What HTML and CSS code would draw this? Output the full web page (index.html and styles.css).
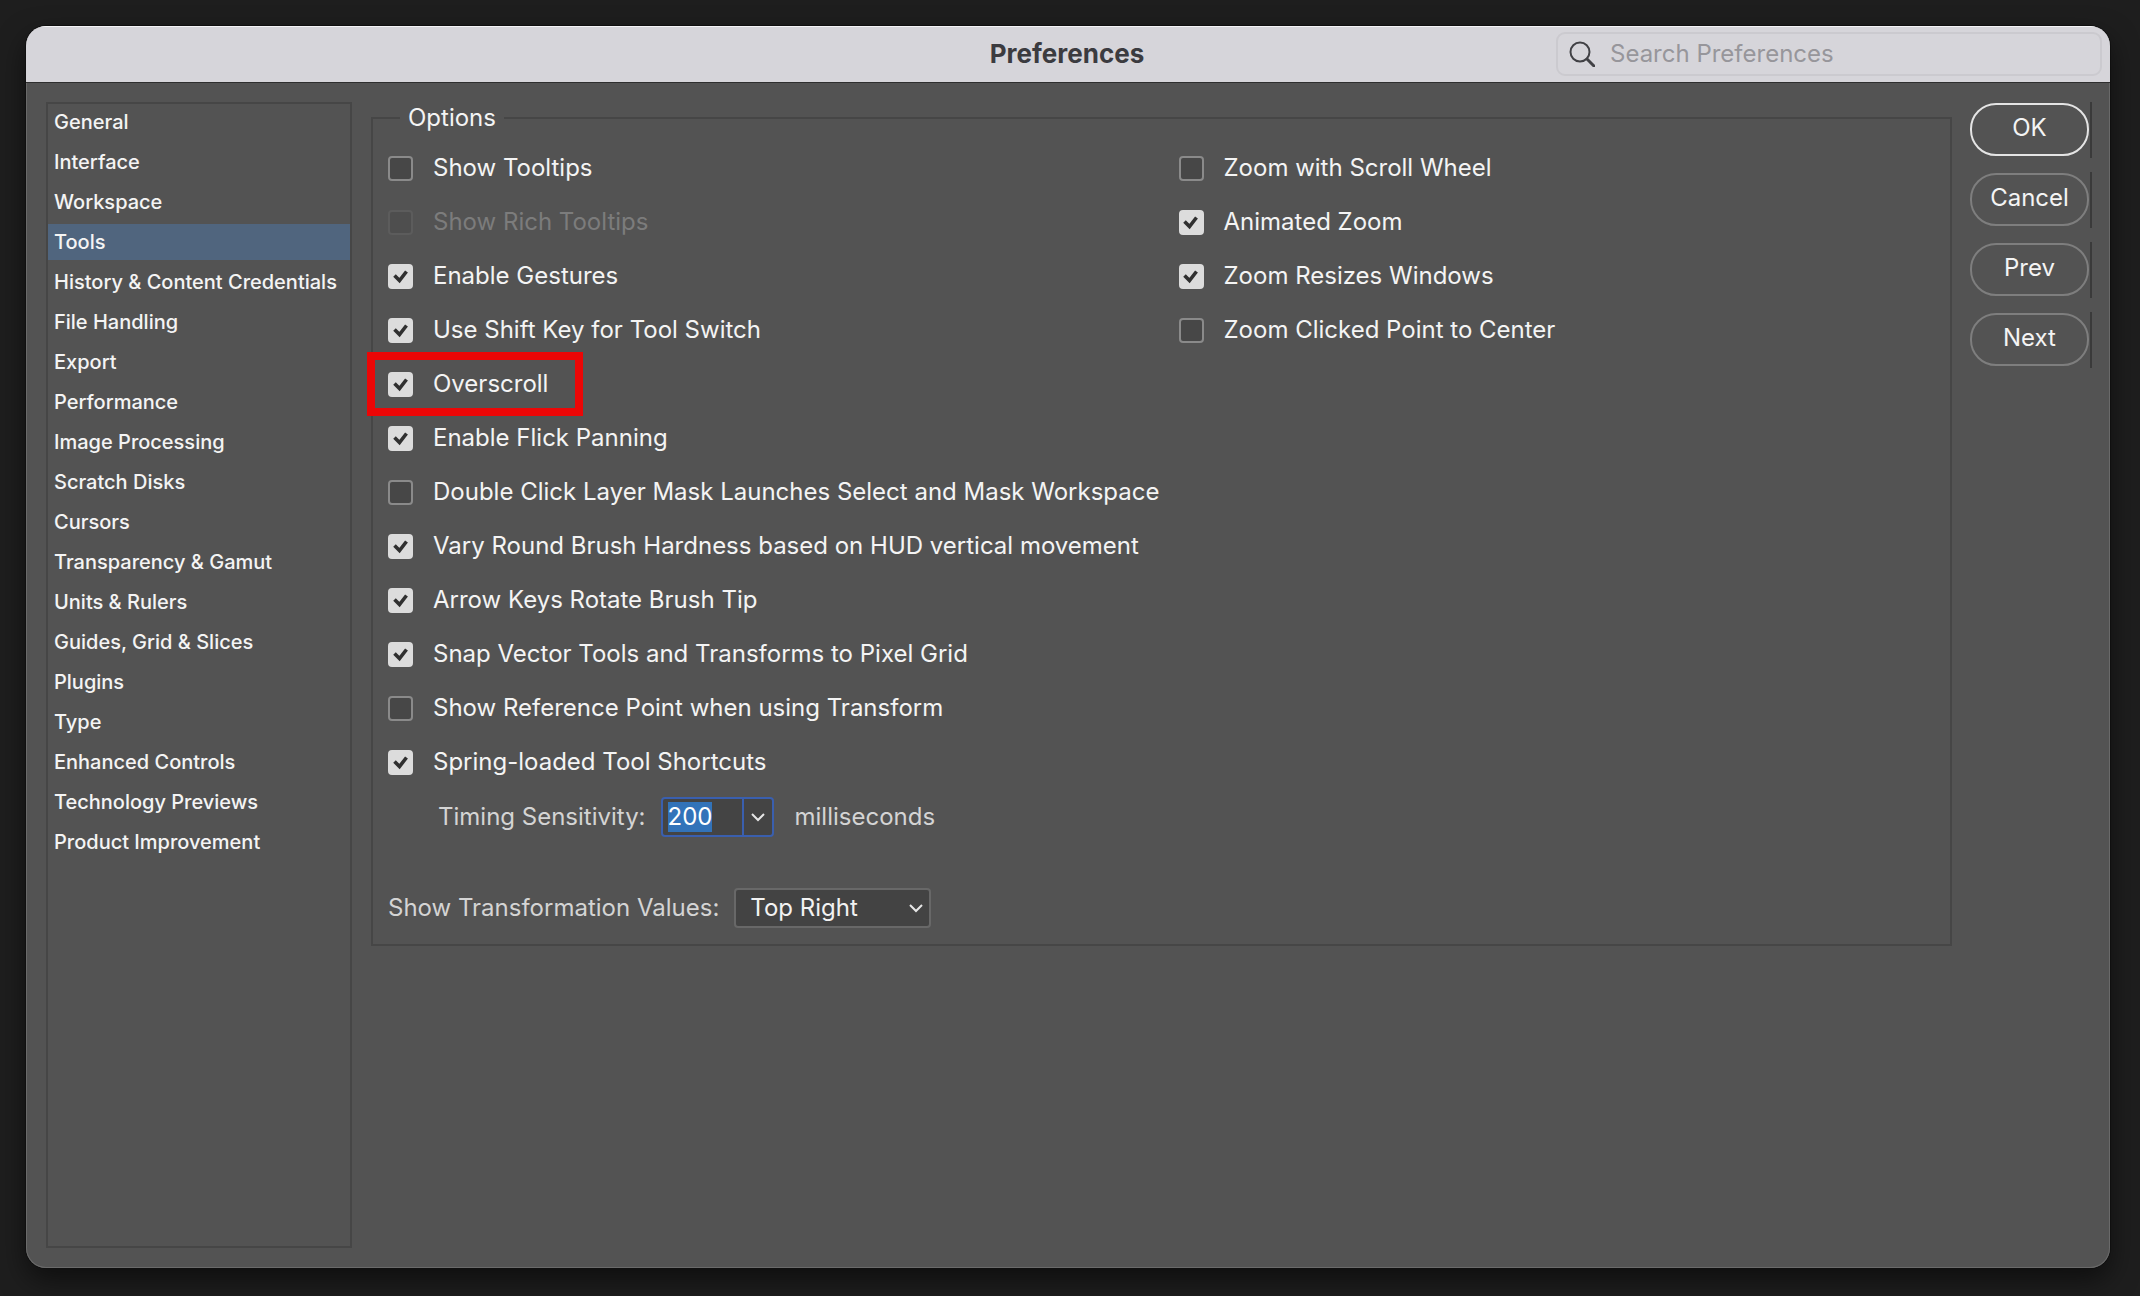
FILE: index.html
```html
<!DOCTYPE html>
<html lang="en">
<head>
<meta charset="utf-8">
<title>Preferences</title>
<link rel="stylesheet" href="styles.css">
</head>
<body>
<div class="dialog">
  <header class="titlebar">
    <h1 class="title">Preferences</h1>
    <label class="search">
      <svg class="search-icon" viewBox="0 0 26 26" aria-hidden="true"><circle cx="11" cy="11" r="9.5"/><path d="M18 18l7 7"/></svg>
      <input class="search-input" type="search" placeholder="Search Preferences" aria-label="Search Preferences">
    </label>
  </header>
  <div class="body">
    <nav class="sidebar">
      <a class="nav-item" href="#general">General</a>
      <a class="nav-item" href="#interface">Interface</a>
      <a class="nav-item" href="#workspace">Workspace</a>
      <a class="nav-item selected" href="#tools" aria-current="page">Tools</a>
      <a class="nav-item" href="#history">History &amp; Content Credentials</a>
      <a class="nav-item" href="#files">File Handling</a>
      <a class="nav-item" href="#export">Export</a>
      <a class="nav-item" href="#performance">Performance</a>
      <a class="nav-item" href="#image">Image Processing</a>
      <a class="nav-item" href="#scratch">Scratch Disks</a>
      <a class="nav-item" href="#cursors">Cursors</a>
      <a class="nav-item" href="#transparency">Transparency &amp; Gamut</a>
      <a class="nav-item" href="#units">Units &amp; Rulers</a>
      <a class="nav-item" href="#guides">Guides, Grid &amp; Slices</a>
      <a class="nav-item" href="#plugins">Plugins</a>
      <a class="nav-item" href="#type">Type</a>
      <a class="nav-item" href="#enhanced">Enhanced Controls</a>
      <a class="nav-item" href="#previews">Technology Previews</a>
      <a class="nav-item" href="#improvement">Product Improvement</a>
    </nav>
    <fieldset class="options">
      <legend class="legend">Options</legend>
      <div class="columns">
        <div class="column">
          <label class="option"><input class="check" type="checkbox">Show Tooltips</label>
          <label class="option disabled"><input class="check" type="checkbox" disabled>Show Rich Tooltips</label>
          <label class="option"><input class="check" type="checkbox" checked>Enable Gestures</label>
          <label class="option"><input class="check" type="checkbox" checked>Use Shift Key for Tool Switch</label>
          <label class="option highlighted"><input class="check" type="checkbox" checked>Overscroll</label>
          <label class="option"><input class="check" type="checkbox" checked>Enable Flick Panning</label>
          <label class="option"><input class="check" type="checkbox">Double Click Layer Mask Launches Select and Mask Workspace</label>
          <label class="option"><input class="check" type="checkbox" checked>Vary Round Brush Hardness based on HUD vertical movement</label>
          <label class="option"><input class="check" type="checkbox" checked>Arrow Keys Rotate Brush Tip</label>
          <label class="option"><input class="check" type="checkbox" checked>Snap Vector Tools and Transforms to Pixel Grid</label>
          <label class="option"><input class="check" type="checkbox">Show Reference Point when using Transform</label>
          <label class="option"><input class="check" type="checkbox" checked>Spring-loaded Tool Shortcuts</label>
        </div>
        <div class="column">
          <label class="option"><input class="check" type="checkbox">Zoom with Scroll Wheel</label>
          <label class="option"><input class="check" type="checkbox" checked>Animated Zoom</label>
          <label class="option"><input class="check" type="checkbox" checked>Zoom Resizes Windows</label>
          <label class="option"><input class="check" type="checkbox">Zoom Clicked Point to Center</label>
        </div>
      </div>
      <div class="field timing">
        <label for="timing">Timing Sensitivity:</label>
        <span class="combo">
          <input class="combo-input" id="timing" type="text" value="200">
          <button class="combo-button" type="button" aria-label="Show values"><svg class="chevron" viewBox="0 0 14 10" aria-hidden="true"><path d="M1 2l6 6 6-6"/></svg></button>
        </span>
        <span class="unit">milliseconds</span>
      </div>
      <div class="field">
        <label for="values">Show Transformation Values:</label>
        <select class="dropdown" id="values"><option>Top Right</option></select>
      </div>
    </fieldset>
    <div class="actions">
      <div class="action"><button class="button primary" type="button">OK</button></div>
      <div class="action"><button class="button" type="button">Cancel</button></div>
      <div class="action"><button class="button" type="button">Prev</button></div>
      <div class="action"><button class="button" type="button">Next</button></div>
    </div>
  </div>
</div>
<script src="script.js"></script>
</body>
</html>
```
FILE: styles.css
```css
* { box-sizing: border-box; }
body {
  margin: 0;
  min-height: 100vh;
  display: flex;
  padding: 26px 30px 28px 26px;
  background: #1e1e1e;
  color: #f4f4f4;
  font: 24px/32px Inter, "Liberation Sans", sans-serif;
}
input, button, select { font: inherit; color: inherit; margin: 0; }

.dialog {
  flex: 1;
  display: flex;
  flex-direction: column;
  overflow: hidden;
  border-radius: 20px;
  background: #535353;
  box-shadow: inset 0 0 0 1px #6a6a6a, 0 0 0 1px #101010, 0 12px 28px #0008;
}

.titlebar {
  display: grid;
  grid-template-columns: 1fr auto 1fr;
  align-items: center;
  height: 57px;
  padding: 0 8px 2px 0;
  background: #d6d5da;
  border-top: 1px solid #f4f4f6;
  border-bottom: 1px solid #2e2e2e;
}
.title { grid-column: 2; margin: 0; padding-left: 6px; font-size: 26px; line-height: 32px; font-weight: 700; color: #3b3b3f; }
.search {
  justify-self: end;
  display: flex;
  align-items: center;
  gap: 15px;
  width: 546px;
  height: 44px;
  padding: 0 11px;
  border: 2px solid #cbcacf;
  border-radius: 9px;
}
.search-icon { width: 26px; height: 26px; fill: none; stroke: #414145; stroke-width: 2; stroke-linecap: round; }
.search-icon path { stroke-width: 3; }
.search-input { flex: 1; min-width: 0; padding: 0; border: 0; background: none; outline: 0; color: #3b3b3f; }
.search-input::placeholder { color: #97969b; opacity: 1; }

.body { flex: 1; display: flex; padding: 19px 18px 20px 20px; }
.sidebar {
  flex: 0 0 306px;
  display: flex;
  flex-direction: column;
  gap: 4px;
  border: 2px solid #464646;
}
.nav-item { height: 36px; padding-left: 6px; font-size: 20px; line-height: 37px; font-weight: 500; color: inherit; text-decoration: none; white-space: nowrap; }
.nav-item.selected { background: #50657e; }

.options {
  flex: 1;
  align-self: flex-start;
  min-width: 0;
  margin: 0 18px 0 19px;
  padding: 7px 0 16px;
  border: 2px solid #464646;
}
.legend { margin-left: 27px; padding: 0 8px; }
.columns { display: grid; grid-template-columns: 1fr 1fr; column-gap: 4px; }
.column { display: flex; flex-direction: column; align-items: flex-start; padding-left: 15px; }
.option { position: relative; display: flex; align-items: center; gap: 20px; height: 54px; white-space: nowrap; }
.option.disabled { color: #7c7c7c; }
.option.highlighted::after {
  content: "";
  position: absolute;
  inset: -5px -35px -5px -21px;
  border: 8px solid #ec0606;
}
.check { appearance: none; width: 25px; height: 25px; border: 2px solid #8a8a8a; border-radius: 4px; background: #474747; }
.check:disabled { border-color: #5c5c5c; background: #4e4e4e; }
.check:checked {
  border-color: #dcdcdc;
  background: #dcdcdc url("data:image/svg+xml,%3Csvg xmlns='http://www.w3.org/2000/svg' viewBox='0 0 20 20'%3E%3Cpath d='M3.5 9.5l5 5 7-9' fill='none' stroke='%23303030' stroke-width='3.6'/%3E%3C/svg%3E") center / 20px 20px no-repeat;
}

.field { display: flex; align-items: center; height: 40px; padding-left: 15px; gap: 15px; color: #d4d4d4; }
.timing { margin: 8px 0 51px; padding-left: 65px; }
.combo { display: flex; width: 113px; height: 40px; border: 2px solid #3a5fae; border-radius: 4px; background: #444; color: #f2f2f2; }
.combo-input { flex: 1; min-width: 0; padding: 0 5px; border: 0; outline: 0; background: none; line-height: 30px; }
.combo-input::selection { background: #3273b9; color: #fff; }
.combo-button { width: 30px; padding: 0; border: 0; border-left: 2px solid #3a5fae; background: none; line-height: 0; }
.chevron { width: 14px; height: 10px; fill: none; stroke: #e6e6e6; stroke-width: 2; }
.unit { padding-left: 6px; }
.dropdown {
  appearance: none;
  width: 197px;
  height: 40px;
  padding: 0 14px;
  border: 2px solid #686868;
  border-radius: 4px;
  color: #f2f2f2;
  background: #434343 url("data:image/svg+xml,%3Csvg xmlns='http://www.w3.org/2000/svg' viewBox='0 0 14 10'%3E%3Cpath d='M1 2l6 6 6-6' fill='none' stroke='%23e6e6e6' stroke-width='2'/%3E%3C/svg%3E") right 6px center / 14px 10px no-repeat;
}

.actions { display: flex; flex-direction: column; gap: 14px; }
.action { height: 56px; padding-right: 1px; border-right: 2px solid #3a3a3a; }
.button { display: block; width: 119px; height: 53px; margin-top: 1px; padding: 0 0 4px; border: 2px solid #7e7e7e; border-radius: 26px; background: none; }
.button.primary { border-color: #e4e4e4; }
```
FILE: script.js
```js
const timing = document.getElementById("timing");
timing.focus();
timing.select();
```
